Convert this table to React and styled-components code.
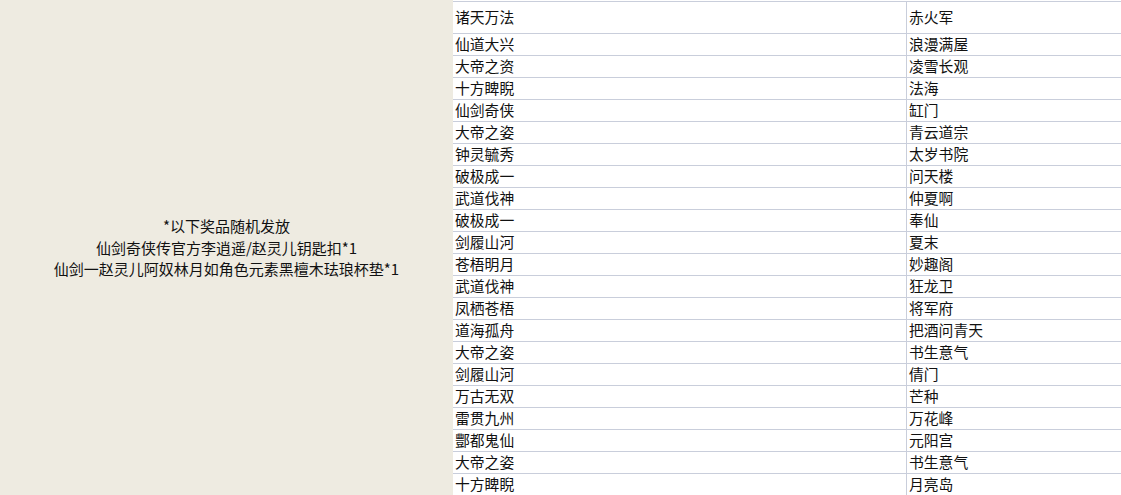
import React from 'react'
import styled, { createGlobalStyle } from 'styled-components'

const rows = [
    ['仙道大兴', '浪漫满屋'],
    ['大帝之资', '凌雪长观'],
    ['十方睥睨', '法海'],
    ['仙剑奇侠', '缸门'],
    ['大帝之姿', '青云道宗'],
    ['钟灵毓秀', '太岁书院'],
    ['破极成一', '问天楼'],
    ['武道伐神', '仲夏啊'],
    ['破极成一', '奉仙'],
    ['剑履山河', '夏末'],
    ['苍梧明月', '妙趣阁'],
    ['武道伐神', '狂龙卫'],
    ['凤栖苍梧', '将军府'],
    ['道海孤舟', '把酒问青天'],
    ['大帝之姿', '书生意气'],
    ['剑履山河', '倩门'],
    ['万古无双', '芒种'],
    ['雷贯九州', '万花峰'],
    ['酆都鬼仙', '元阳宫'],
    ['大帝之姿', '书生意气'],
    ['十方睥睨', '月亮岛'],
]

function App() {
  return (
    <>
    <GlobalStyle />
    <Page>
        <Prize>
            <p>*以下奖品随机发放</p>
            <p>仙剑奇侠传官方李逍遥/赵灵儿钥匙扣*1</p>
            <p>仙剑一赵灵儿阿奴林月如角色元素黑檀木珐琅杯垫*1</p>
        </Prize>
        <Sheet>
            <Cell $first $head>诸天万法</Cell>
            <Cell $head>赤火军</Cell>
            {rows.map((r, i) => (
                <React.Fragment key={i}>
                    <Cell $first>{r[0]}</Cell>
                    <Cell>{r[1]}</Cell>
                </React.Fragment>
            ))}
        </Sheet>
    </Page>
    </>
  )
}

export default App

const GlobalStyle = createGlobalStyle`
body{
    margin: 0;
    background: #ffffff;
    font-family: "Noto Sans CJK SC", "Liberation Sans", sans-serif;
    color: #111;
}
p{
    margin: 0;
}
`

const Page = styled.div`
display: flex;
width: 1121px;
height: 495px;
overflow: hidden;
`

const Prize = styled.div`
width: 453px;
flex-shrink: 0;
background: #eeebe1;
display: flex;
flex-direction: column;
justify-content: center;
align-items: center;
text-align: center;
font-size: 15px;
line-height: 21.5px;
`

const Sheet = styled.div`
flex: 1;
padding-top: 1px;
display: grid;
grid-template-columns: 454px 1fr;
align-content: start;
`

const Cell = styled.div`
box-sizing: border-box;
height: ${p => p.$head ? '32px' : '22px'};
border-top: 1px solid #c9cedb;
border-right: ${p => p.$first ? '1px solid #c9cedb' : 'none'};
padding-left: 2px;
font-size: 14.8px;
line-height: ${p => p.$head ? '30px' : '20px'};
white-space: nowrap;
overflow: hidden;
`
